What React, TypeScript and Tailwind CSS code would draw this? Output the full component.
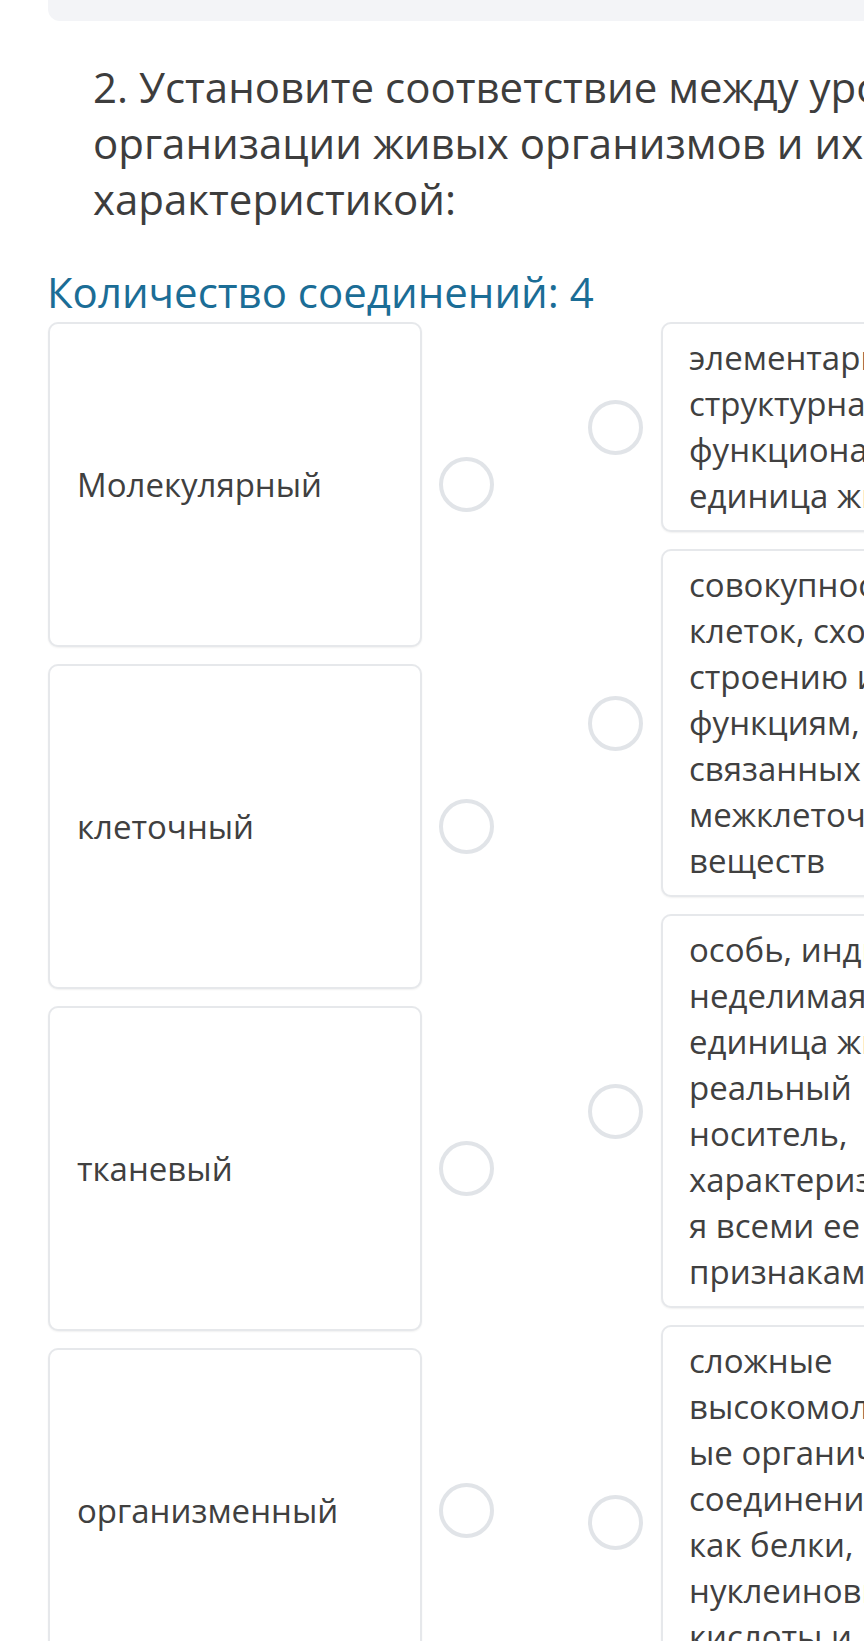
import React from "react";

const leftItems = ["Молекулярный", "клеточный", "тканевый", "организменный"];

const rightItems: string[][] = [
  ["элементарная", "структурная и", "функциональная", "единица живого"],
  [
    "совокупность",
    "клеток, сходных по",
    "строению и",
    "функциям,",
    "связанных",
    "межклеточным",
    "веществ",
  ],
  [
    "особь, индивид –",
    "неделимая",
    "единица жизни,",
    "реальный",
    "носитель,",
    "характеризующаяс",
    "я всеми ее",
    "признаками",
  ],
  [
    "сложные",
    "высокомолекулярн",
    "ые органические",
    "соединения, такие",
    "как белки,",
    "нуклеиновые",
    "кислоты и",
    "полисахариды",
  ],
];

function Circle() {
  return (
    <div className="w-[55px] h-[55px] shrink-0 rounded-full border-[4px] border-[#e1e4e8] bg-white" />
  );
}

export default function App() {
  return (
    <div className="w-[864px] h-[1641px] overflow-hidden bg-white font-['Open_Sans',sans-serif] text-[#404040]">
      <div className="ml-[48px] h-[21px] rounded-bl-[12px] bg-[#f3f4f7]" />
      <div className="pl-[93px] mt-[38px] text-[42px] leading-[56px] text-[#3d3d3d] whitespace-nowrap">
        <div>2. Установите соответствие между уровнями</div>
        <div>организации живых организмов и их</div>
        <div>характеристикой:</div>
      </div>
      <div className="ml-[47px] mt-[41px] text-[42px] leading-[48px] text-[#1b6d96] whitespace-nowrap">
        Количество соединений: 4
      </div>
      <div className="flex items-start ml-[48px] mt-[6px] gap-[94px]">
        <div className="flex flex-col gap-[17px] shrink-0">
          {leftItems.map((t) => (
            <div key={t} className="flex items-center gap-[17px]">
              <div className="w-[374px] h-[325px] shrink-0 flex items-center rounded-[10px] border-2 border-[#e6e8eb] shadow-[0_1px_2px_rgba(0,0,0,0.06)] bg-white pl-[27px] text-[33px] leading-[46px] text-[#404040]">
                {t}
              </div>
              <Circle />
            </div>
          ))}
        </div>
        <div className="flex flex-col gap-[17px] shrink-0">
          {rightItems.map((lines, i) => (
            <div key={i} className="flex items-center gap-[18px]">
              <Circle />
              <div className="w-[372px] shrink-0 rounded-[10px] border-2 border-[#e6e8eb] shadow-[0_1px_2px_rgba(0,0,0,0.06)] bg-white pl-[26px] py-[11px] text-[33px] leading-[46px] text-[#404040] whitespace-nowrap">
                {lines.map((l, j) => (
                  <div key={j}>{l}</div>
                ))}
              </div>
            </div>
          ))}
        </div>
      </div>
    </div>
  );
}
